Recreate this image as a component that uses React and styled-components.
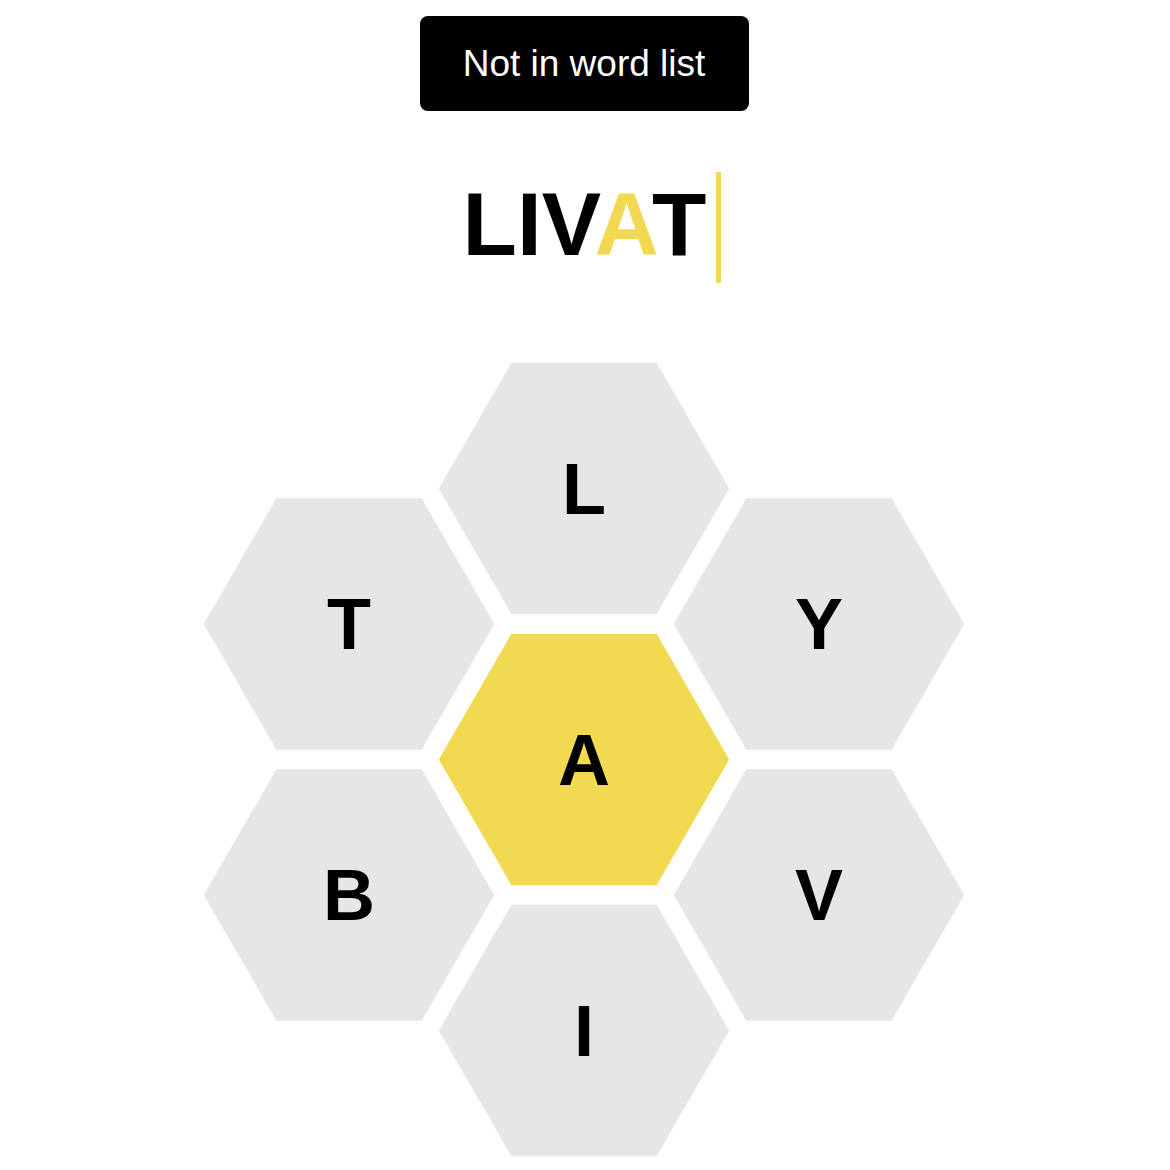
import React from 'react';
import styled, { createGlobalStyle } from 'styled-components';

const GlobalStyle = createGlobalStyle`
  body {
    margin: 0;
    background: #ffffff;
    font-family: "Liberation Sans", Arial, sans-serif;
  }
`;

const Page = styled.div`
  display: flex;
  flex-direction: column;
  align-items: center;
  width: 1168px;
  height: 1170px;
  overflow: hidden;
`;

// message toast at the top
const Toast = styled.div`
  margin-top: 16px;
  height: 95px;
  width: 329px;
  box-sizing: border-box;
  display: flex;
  align-items: center;
  justify-content: center;
  background: #000;
  color: #fff;
  border-radius: 8px;
  font-size: 37px;
`;

const InputRow = styled.div`
  margin-top: 61px;
  height: 111px;
  display: flex;
  align-items: flex-start;
  margin-left: 16px;
`;

const Word = styled.span`
  margin-top: 8px;
  font-size: 89px;
  font-weight: 700;
  line-height: 1;
  color: #000;
`;

const Letter = styled.span`
  color: ${(p) => (p.$center ? '#f1da52' : '#000')};
`;

const Cursor = styled.span`
  flex: none;
  width: 5px;
  height: 111px;
  margin-left: 10px;
  background: #f1da52;
`;

const Hive = styled.div`
  margin-top: 70px;
  display: flex;
  align-items: center;
`;

const Column = styled.div`
  display: flex;
  flex-direction: column;
  & + & {
    margin-left: -78px;
  }
`;

const Cell = styled.div`
  width: 313px;
  height: 271px;
  display: flex;
  align-items: center;
  justify-content: center;
  background: ${(p) => (p.$center ? '#f1da52' : '#e6e6e6')};
  clip-path: polygon(3.6% 50%, 26.8% 3.6%, 73.2% 3.6%, 96.4% 50%, 73.2% 96.4%, 26.8% 96.4%);
  font-size: 72px;
  font-weight: 700;
  color: #000;
  line-height: 1;
`;

const centerLetter = 'A';

const columns = [
  ['T', 'B'],
  ['L', 'A', 'I'],
  ['Y', 'V'],
];

export default function App() {
  const word = 'LIVAT';
  return (
    <Page>
      <GlobalStyle />
      <Toast>Not in word list</Toast>
      <InputRow>
        <Word>
          {word.split('').map((ch, i) => (
            <Letter key={i} $center={ch === centerLetter}>{ch}</Letter>
          ))}
        </Word>
        <Cursor />
      </InputRow>
      <Hive>
        {columns.map((col, ci) => (
          <Column key={ci}>
            {col.map((l) => (
              <Cell key={l} $center={l === centerLetter}>{l}</Cell>
            ))}
          </Column>
        ))}
      </Hive>
    </Page>
  );
}
